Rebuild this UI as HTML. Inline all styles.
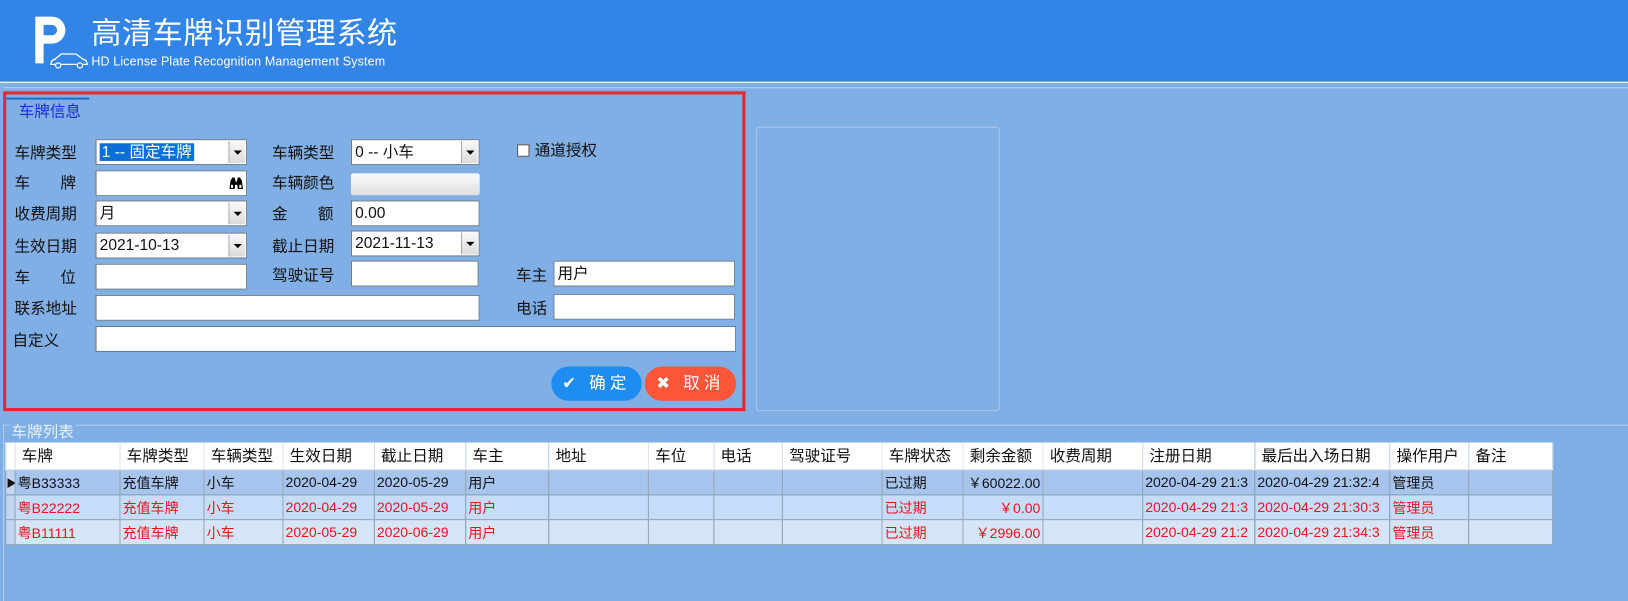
<!DOCTYPE html>
<html><head><meta charset="utf-8">
<style>
*{box-sizing:border-box;margin:0;padding:0}
html,body{width:1628px;height:597px;overflow:hidden;background:#7fafe5}
body{font-family:"Liberation Sans","Microsoft YaHei","Noto Sans CJK SC",sans-serif;font-size:15px;color:#111}
#w{position:absolute;left:0;top:0;width:1568px;height:575px;transform:scale(1.03827);transform-origin:0 0}
.a{position:absolute}
.hdr{left:0;top:0;width:1568px;height:78px;background:#3284e6}
.lbl{position:absolute;font-size:15px;color:#111;line-height:20px;white-space:nowrap}
.in{position:absolute;background:#fff;border:1px solid #6b7a8c;height:25px;font-size:15px;line-height:23px;padding-left:3px;white-space:nowrap;overflow:hidden}
.dd{position:absolute;right:1px;top:1px;width:16px;height:21px;background:linear-gradient(#f8f8f8,#dcdcdc);border-left:1px solid #aaa}
.dd:after{content:"";position:absolute;left:4px;top:9px;border-left:4px solid transparent;border-right:4px solid transparent;border-top:4px solid #000}
table{border-collapse:collapse;position:absolute;left:5px;top:426px;font-size:13.5px;table-layout:fixed;width:1490px}
td{border:1px solid #9aa8b8;height:24px;padding:0 2px;white-space:nowrap;overflow:hidden}
tr.h td{background:#fff;height:26px;font-size:15px;padding-left:6px;border-color:#e4e8ee;border-top:none}
tr.r1 td{background:#a6c4ec}
tr.r2 td{background:#c6ddfa;color:#e8141c}
tr.r3 td{background:#d6e5f5;color:#e8141c}
td.ind{background:#c0d6f2 !important;padding:0;font-size:10px}
</style></head><body><div id="w">
<div class="a hdr"></div>
<svg class="a" style="left:30px;top:14px" width="60" height="55">
<path d="M4 2 H20 a13 13 0 0 1 0 26 H12 V47 H4 Z M12 10 V20 H20 a5 5 0 0 0 0 -10 Z" fill="#fff"/>
<path d="M19 48 q0-4 4-5 l6-5 h14 l7 5 q4 1 4 5 z" fill="none" stroke="#fff" stroke-width="1.3"/>
<circle cx="26" cy="49" r="2.5" fill="#3284e6" stroke="#fff" stroke-width="1.2"/>
<circle cx="47" cy="49" r="2.5" fill="#3284e6" stroke="#fff" stroke-width="1.2"/>
</svg>
<div class="a" style="left:88px;top:15px;color:#fff;font-size:29px;line-height:36px;letter-spacing:0.5px">高清车牌识别管理系统</div>
<div class="a" style="left:88px;top:52px;color:#fff;font-size:12px;line-height:14px;letter-spacing:0.15px">HD License Plate Recognition Management System</div>
<div class="a" style="left:0;top:79px;width:1568px;height:1px;background:#e8f0fb"></div>
<div class="a" style="left:3px;top:84px;width:1565px;height:1px;background:#b5d0f2"></div>
<div class="a" style="left:3px;top:88px;width:715px;height:308px;border:3px solid #e02b2b"></div>
<div class="a" style="left:6px;top:94px;width:80px;height:2px;background:#1f6fd0"></div>
<div class="a" style="left:18px;top:96px;color:#1a2bd8;font-size:15px">车牌信息</div>

<div class="lbl" style="left:14px;top:138px">车牌类型</div>
<div class="in" style="left:92px;top:134px;width:146px"><span style="background:#0a6fd8;color:#fff;padding:0 2px">1 -- 固定车牌</span><div class="dd"></div></div>
<div class="lbl" style="left:262px;top:138px">车辆类型</div>
<div class="in" style="left:338px;top:134px;width:124px">0 -- 小车<div class="dd"></div></div>
<div class="a" style="left:498px;top:139px;width:12px;height:12px;background:#fff;border:1px solid #555"></div>
<div class="lbl" style="left:515px;top:136px">通道授权</div>

<div class="lbl" style="left:14px;top:167px">车&nbsp;&nbsp;&nbsp;&nbsp;&nbsp;&nbsp;&nbsp;牌</div>
<div class="in" style="left:92px;top:164px;width:146px"><svg style="position:absolute;right:2px;top:4px" width="15" height="14"><path d="M1 13 L2 5 L4 2 H6 L7 6 H8 L9 2 H11 L13 5 L14 13 H9 L8.5 9 H6.5 L6 13 Z" fill="#000"/><rect x="2.5" y="9" width="2" height="3" fill="#fff"/><rect x="10.5" y="9" width="2" height="3" fill="#fff"/></svg></div>
<div class="lbl" style="left:262px;top:167px">车辆颜色</div>
<div class="a" style="left:338px;top:167px;width:124px;height:21px;background:linear-gradient(#fafafa,#e0e0e0);border-radius:2px"></div>

<div class="lbl" style="left:14px;top:197px">收费周期</div>
<div class="in" style="left:92px;top:193px;width:146px">月<div class="dd"></div></div>
<div class="lbl" style="left:262px;top:197px">金&nbsp;&nbsp;&nbsp;&nbsp;&nbsp;&nbsp;&nbsp;额</div>
<div class="in" style="left:338px;top:193px;width:124px">0.00</div>

<div class="lbl" style="left:14px;top:228px">生效日期</div>
<div class="in" style="left:92px;top:224px;width:146px">2021-10-13<div class="dd"></div></div>
<div class="lbl" style="left:262px;top:228px">截止日期</div>
<div class="in" style="left:338px;top:222px;width:124px">2021-11-13<div class="dd"></div></div>

<div class="lbl" style="left:14px;top:258px">车&nbsp;&nbsp;&nbsp;&nbsp;&nbsp;&nbsp;&nbsp;位</div>
<div class="in" style="left:92px;top:254px;width:146px"></div>
<div class="lbl" style="left:262px;top:256px">驾驶证号</div>
<div class="in" style="left:338px;top:251px;width:123px"></div>
<div class="lbl" style="left:497px;top:256px">车主</div>
<div class="in" style="left:533px;top:251px;width:175px">用户</div>

<div class="lbl" style="left:14px;top:288px">联系地址</div>
<div class="in" style="left:92px;top:284px;width:370px"></div>
<div class="lbl" style="left:497px;top:288px">电话</div>
<div class="in" style="left:533px;top:283px;width:175px"></div>

<div class="lbl" style="left:12px;top:319px">自定义</div>
<div class="in" style="left:92px;top:314px;width:617px"></div>

<div class="a" style="left:531px;top:353px;width:87px;height:33px;border-radius:17px;background:#1e8cf0;color:#fff;font-size:16px;line-height:33px;text-align:center;letter-spacing:4px">✔&nbsp;确定</div>
<div class="a" style="left:621px;top:353px;width:88px;height:33px;border-radius:17px;background:#fc5638;color:#fff;font-size:16px;line-height:33px;text-align:center;letter-spacing:4px">✖&nbsp;取消</div>

<div class="a" style="left:728px;top:122px;width:235px;height:274px;border:1px solid #aac6ec;border-radius:3px"></div>

<div class="a" style="left:3px;top:409px;width:1565px;height:1px;background:#b5d0f2"></div>
<div class="a" style="left:3px;top:409px;width:1px;height:170px;background:#b5d0f2"></div>
<div class="a" style="left:9px;top:405px;color:#e8f0fb;font-size:15px;background:#7fafe5;padding:0 2px">车牌列表</div>

<table>
<colgroup><col style="width:9px"><col style="width:101px"><col style="width:81px"><col style="width:76px"><col style="width:88px"><col style="width:88px"><col style="width:80px"><col style="width:96px"><col style="width:63px"><col style="width:66px"><col style="width:96px"><col style="width:78px"><col style="width:77px"><col style="width:96px"><col style="width:108px"><col style="width:130px"><col style="width:76px"><col style="width:81px"></colgroup>
<tr class="h"><td class="ind" style="background:#fff!important"></td><td>车牌</td><td>车牌类型</td><td>车辆类型</td><td>生效日期</td><td>截止日期</td><td>车主</td><td>地址</td><td>车位</td><td>电话</td><td>驾驶证号</td><td>车牌状态</td><td>剩余金额</td><td>收费周期</td><td>注册日期</td><td>最后出入场日期</td><td>操作用户</td><td>备注</td></tr>
<tr class="r1"><td class="ind">▶</td><td>粤B33333</td><td>充值车牌</td><td>小车</td><td>2020-04-29</td><td>2020-05-29</td><td>用户</td><td></td><td></td><td></td><td></td><td>已过期</td><td style="text-align:right">￥60022.00</td><td></td><td>2020-04-29 21:3</td><td>2020-04-29 21:32:4</td><td>管理员</td><td></td></tr>
<tr class="r2"><td class="ind"></td><td>粤B22222</td><td>充值车牌</td><td>小车</td><td>2020-04-29</td><td>2020-05-29</td><td>用户</td><td></td><td></td><td></td><td></td><td>已过期</td><td style="text-align:right">￥0.00</td><td></td><td>2020-04-29 21:3</td><td>2020-04-29 21:30:3</td><td>管理员</td><td></td></tr>
<tr class="r3"><td class="ind"></td><td>粤B11111</td><td>充值车牌</td><td>小车</td><td>2020-05-29</td><td>2020-06-29</td><td>用户</td><td></td><td></td><td></td><td></td><td>已过期</td><td style="text-align:right">￥2996.00</td><td></td><td>2020-04-29 21:2</td><td>2020-04-29 21:34:3</td><td>管理员</td><td></td></tr>
</table>
</div></body></html>
